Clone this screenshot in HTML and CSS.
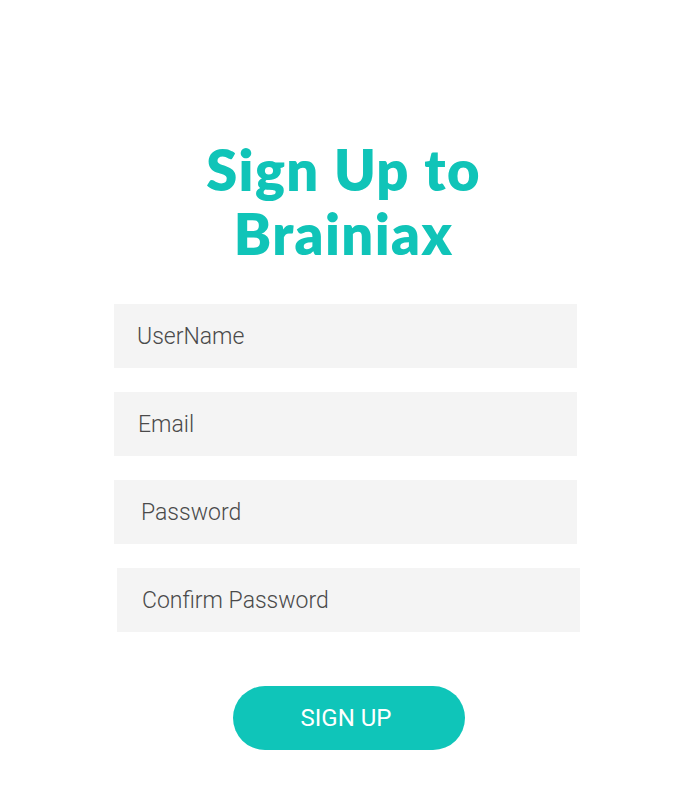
FILE: index.html
```html
<!DOCTYPE html>
<html>
<head>
<meta charset="utf-8">
<link rel="stylesheet" href="styles.css">
</head>
<body>
<main class="page">
  <h1 class="title">Sign Up to<br>Brainiax</h1>
  <form class="form">
    <input class="field" type="text" placeholder="UserName">
    <input class="field field-email" type="email" placeholder="Email">
    <input class="field field-pass" type="password" placeholder="Password">
    <input class="field field-confirm" type="password" placeholder="Confirm Password">
    <button class="btn" type="button">SIGN UP</button>
  </form>
</main>
</body>
</html>
```
FILE: styles.css
```css
html, body {
  margin: 0;
  padding: 0;
  background: #ffffff;
}
.page {
  width: 687px;
  display: flex;
  flex-direction: column;
}
.title {
  margin: 138px 0 0 0;
  text-align: center;
  font-family: Lato, "Open Sans", sans-serif;
  font-weight: 800;
  font-size: 56px;
  line-height: 64px;
  color: #10c4b8;
  letter-spacing: 1.4px;
}
.form {
  display: flex;
  flex-direction: column;
  width: 463px;
  margin: 38px 0 0 114px;
  gap: 24px;
}
.field {
  box-sizing: border-box;
  width: 463px;
  height: 64px;
  border: none;
  outline: none;
  background: #f4f4f4;
  padding: 0 0 0 23px;
  font-family: Roboto, sans-serif;
  font-weight: 300;
  font-size: 23px;
  color: #444;
}
.field::placeholder {
  color: #4a4a4a;
  opacity: 1;
}
.field-email { padding-left: 24px; }
.field-pass { padding-left: 27px; }
.field-confirm { margin-left: 3px; padding-left: 25px; }
.btn {
  align-self: flex-start;
  margin: 30px 0 0 119px;
  width: 232px;
  height: 64px;
  border: none;
  border-radius: 32px;
  background: #0fc5b9;
  color: #ffffff;
  font-family: Roboto, sans-serif;
  font-weight: 400;
  font-size: 24px;
  padding: 0 6px 0 0;
}
```
